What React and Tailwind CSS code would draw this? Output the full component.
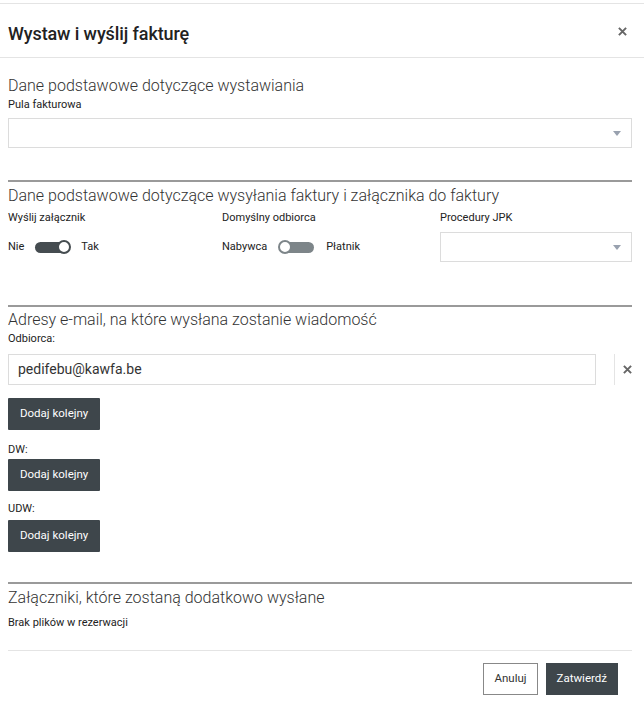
import React from 'react'

const font = { fontFamily: 'Roboto, "Noto Sans", sans-serif' }

const Caret = () => (
  <svg width="8" height="5" viewBox="0 0 8 5" className="text-gray-400">
    <path d="M0 0h8L4 5z" fill="currentColor" />
  </svg>
)

const Close = ({ className }) => (
  <svg width="9" height="9" viewBox="0 0 10 10" className={className}>
    <path d="M1 1l8 8M9 1l-8 8" stroke="currentColor" strokeWidth="2.2" />
  </svg>
)

const Toggle = ({ on }) => (
  <span className="relative inline-flex items-center w-[37px] h-[14px]">
    <span className={`absolute left-[1px] right-[1px] h-[11px] rounded-full ${on ? 'bg-[#454c50]' : 'bg-[#7d8589]'}`} />
    <span
      className={`absolute w-[14px] h-[14px] rounded-full bg-white border-2 ${on ? 'right-0 border-[#454c50]' : 'left-0 border-[#7d8589]'}`}
    />
  </span>
)

const DarkButton = ({ children }) => (
  <button className="bg-[#3e464b] text-white text-[11.5px] h-[32px] px-[12px] rounded-[1px]">{children}</button>
)

const SectionTitle = ({ children }) => (
  <h3 className="text-[16px] font-light text-[#333] leading-[20px]">{children}</h3>
)

const Label = ({ children, className = '' }) => (
  <div className={`text-[11px] text-[#222] leading-[14px] ${className}`}>{children}</div>
)

const Select = ({ className = '' }) => (
  <div className={`h-[30px] border border-[#dcdcdc] flex items-center justify-end pr-[10px] bg-white ${className}`}>
    <Caret />
  </div>
)

export default function App() {
  return (
    <div style={font} className="w-[644px] h-[704px] bg-white text-[#222] overflow-hidden">
      <div className="mt-[3px] border-t border-[#e4e4e4]" />
      <div className="h-[54px] flex items-center justify-between pl-[8px] pr-[17px] pt-[6px] border-b border-[#e4e4e4]">
        <h2 className="text-[18px] font-medium text-[#222] tracking-[-0.1px]">Wystaw i wyślij fakturę</h2>
        <Close className="text-[#666] -mt-[4px]" />
      </div>

      <div className="px-[8px] pr-[12px]">
        <div className="pt-[18px]">
          <SectionTitle>Dane podstawowe dotyczące wystawiania</SectionTitle>
          <Label className="mt-[2px]">Pula fakturowa</Label>
          <Select className="mt-[6px]" />
        </div>

        <div className="mt-[32px] border-t-2 border-[#9a9a9a] pt-[4px]">
          <SectionTitle>Dane podstawowe dotyczące wysyłania faktury i załącznika do faktury</SectionTitle>
          <div className="grid grid-cols-[214px_218px_1fr] mt-[5px]">
            <div>
              <Label>Wyślij załącznik</Label>
              <div className="flex items-center gap-[10px] mt-[14px] text-[11px]">
                <span>Nie</span>
                <Toggle on />
                <span>Tak</span>
              </div>
            </div>
            <div>
              <Label>Domyślny odbiorca</Label>
              <div className="flex items-center gap-[11px] mt-[14px] text-[11px]">
                <span>Nabywca</span>
                <Toggle />
                <span>Płatnik</span>
              </div>
            </div>
            <div>
              <Label>Procedury JPK</Label>
              <Select className="mt-[7px]" />
            </div>
          </div>
        </div>

        <div className="mt-[43px] border-t-2 border-[#9a9a9a] pt-[3px]">
          <SectionTitle>Adresy e-mail, na które wysłana zostanie wiadomość</SectionTitle>
          <Label className="mt-[2px]">Odbiorca:</Label>
          <div className="flex items-center mt-[8px]">
            <div className="w-[588px] h-[31px] border border-[#dcdcdc] flex items-center pl-[9px] text-[14px] text-[#333]">
              pedifebu@kawfa.be
            </div>
            <div className="ml-[18px] w-px h-[31px] bg-[#e4e4e4]" />
            <Close className="ml-[8px] text-[#666]" />
          </div>
          <div className="mt-[13px]">
            <DarkButton>Dodaj kolejny</DarkButton>
          </div>
          <Label className="mt-[13px]">DW:</Label>
          <div className="mt-[2px]">
            <DarkButton>Dodaj kolejny</DarkButton>
          </div>
          <Label className="mt-[11px]">UDW:</Label>
          <div className="mt-[4px]">
            <DarkButton>Dodaj kolejny</DarkButton>
          </div>
        </div>

        <div className="mt-[30px] border-t-2 border-[#9a9a9a] pt-[4px]">
          <SectionTitle>Załączniki, które zostaną dodatkowo wysłane</SectionTitle>
          <Label className="mt-[8px]">Brak plików w rezerwacji</Label>
        </div>

        <div className="mt-[20px] border-t border-[#e4e4e4] pt-[12px] flex justify-end gap-[8px] pr-[14px]">
          <button className="h-[32px] px-[10px] border border-[#888] text-[11.5px] text-[#333] bg-white">Anuluj</button>
          <button className="h-[32px] px-[11px] bg-[#3e464b] text-white text-[11.5px]">Zatwierdź</button>
        </div>
      </div>
    </div>
  )
}
